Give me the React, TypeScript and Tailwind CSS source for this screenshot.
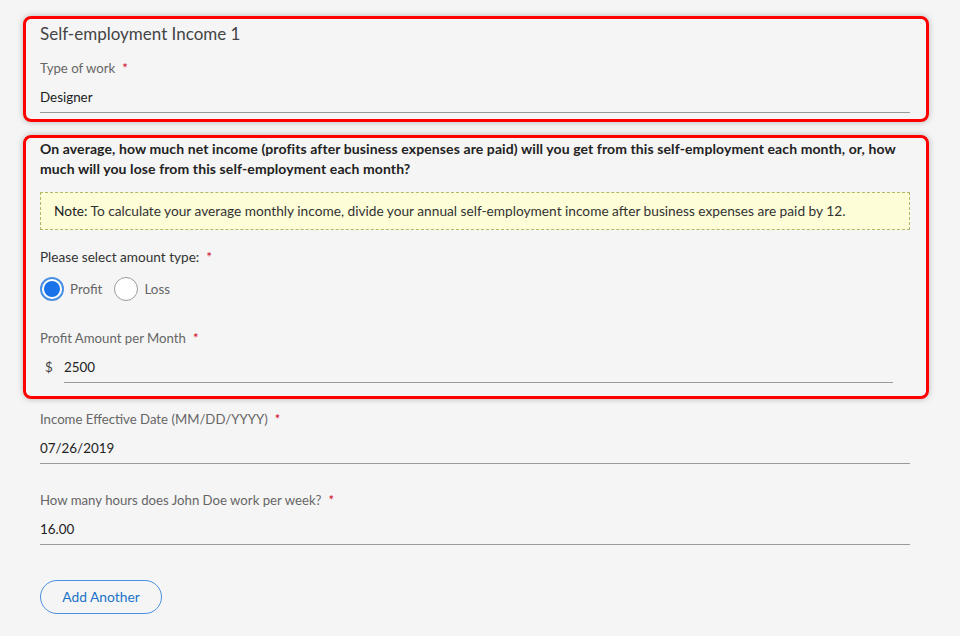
import React from "react";

const font = { fontFamily: "Lato, 'Open Sans', sans-serif" };

function Label({ text }: { text: string }) {
  return (
    <div className="h-5 leading-5 text-[13.2px] text-[#666]">
      {text}
      <span className="ml-[7px] text-[#d0021b]">*</span>
    </div>
  );
}

function Field({ label, value, className = "" }: { label: string; value: string; className?: string }) {
  return (
    <div className={className}>
      <Label text={label} />
      <div className="mt-[9px] border-b border-[#9a9a9a] pb-[5px] leading-5 text-[13.4px] text-[#222]">{value}</div>
    </div>
  );
}

function Radio({ label, checked }: { label: string; checked?: boolean }) {
  return (
    <label className="flex items-center gap-[6px]">
      {checked ? (
        <span className="flex h-6 w-6 items-center justify-center rounded-full border-2 border-[#4a90e2] bg-white">
          <span className="h-4 w-4 rounded-full bg-[#1a73e8]" />
        </span>
      ) : (
        <span className="h-6 w-6 rounded-full border border-[#9a9a9a] bg-white" />
      )}
      <span className="text-[13.4px] text-[#666]">{label}</span>
    </label>
  );
}

export default function App() {
  return (
    <div style={font} className="min-h-screen bg-[#f5f5f5] pl-[23px] pr-[31px] pt-4 pb-6">
      <div className="rounded-lg border-[3px] border-[#ff0000] pl-[14px] pr-4 pt-1 pb-[6px] shadow-[0_0_6px_rgba(0,0,0,0.25)]">
        <div className="h-[22px] leading-[22px] text-[17px] text-[#444]">Self-employment Income 1</div>
        <Field label="Type of work" value="Designer" className="mt-[13px]" />
      </div>

      <div className="mt-[13px] rounded-lg border-[3px] border-[#ff0000] pl-[14px] pr-4 pt-px pb-[13px] shadow-[0_0_6px_rgba(0,0,0,0.25)]">
        <p className="text-[14px] font-bold leading-5 tracking-[0.1px] text-[#222]">
          On average, how much net income (profits after business expenses are paid) will you get from this
          self-employment each month, or, how much will you lose from this self-employment each month?
        </p>
        <div className="mt-[13px] border border-dashed border-[#b5b56a] bg-[#fdfdd8] px-[13px] py-2 text-[13.7px] leading-5 text-[#333]">
          <span className="text-[#222]">Note:</span> To calculate your average monthly income, divide your annual
          self-employment income after business expenses are paid by 12.
        </div>
        <div className="mt-[17px] h-5 leading-5 text-[13.6px] text-[#333]">
          Please select amount type:
          <span className="ml-[7px] text-[#d0021b]">*</span>
        </div>
        <div className="mt-[10px] flex items-center gap-3">
          <Radio label="Profit" checked />
          <Radio label="Loss" />
        </div>
        <div className="mt-[27px]">
          <Label text="Profit Amount per Month" />
        </div>
        <div className="mt-[9px] flex pr-[17px]">
          <span className="w-6 pl-[5px] leading-5 text-[13.4px] text-[#444]">$</span>
          <div className="flex-1 border-b border-[#9a9a9a] pb-[5px] leading-5 text-[13.4px] text-[#222]">2500</div>
        </div>
      </div>

      <div className="ml-[17px] mr-[19px]">
        <Field label="Income Effective Date (MM/DD/YYYY)" value="07/26/2019" className="mt-[10px]" />
        <Field label="How many hours does John Doe work per week?" value="16.00" className="mt-[26px]" />
        <button className="mt-[35px] h-[34px] w-[122px] rounded-full border border-[#4a90e2] text-[13.8px] text-[#1a73c8]">
          Add Another
        </button>
      </div>
    </div>
  );
}
